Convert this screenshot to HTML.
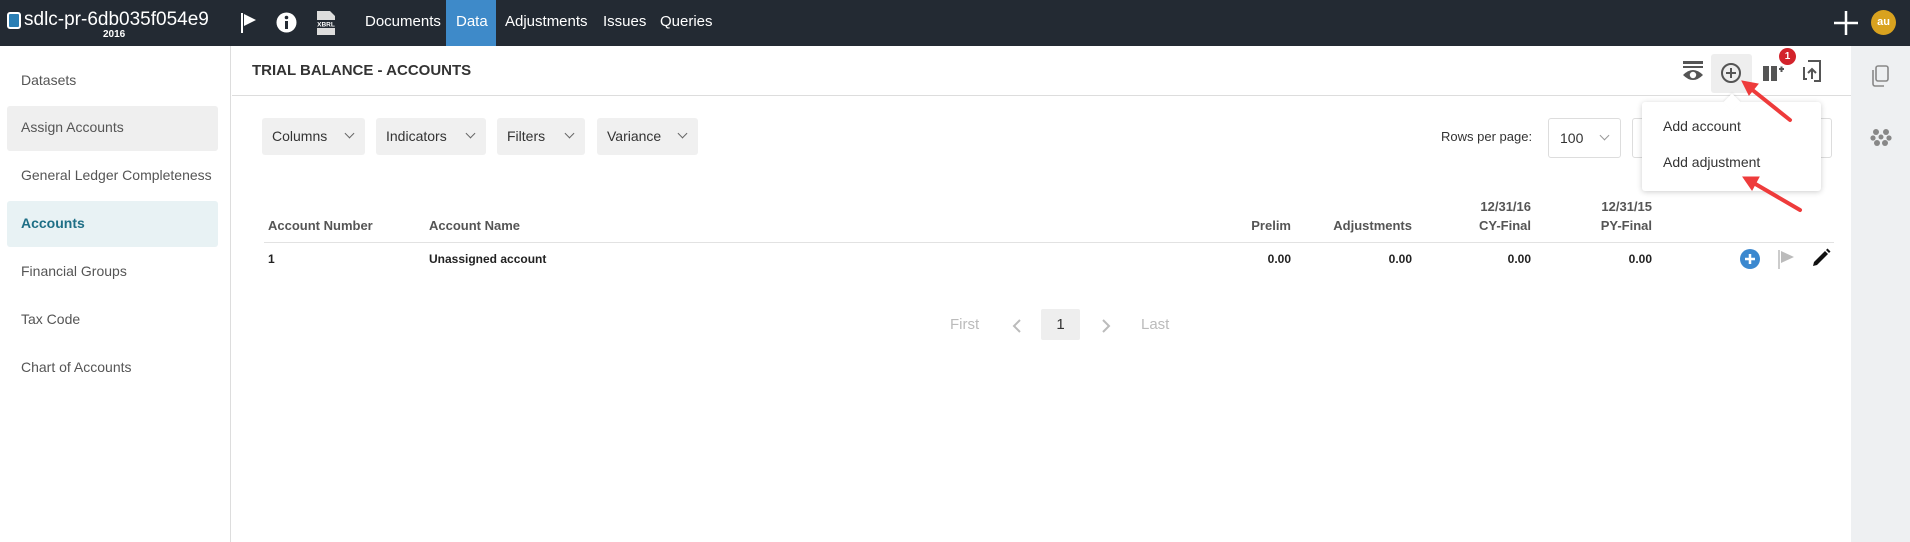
<!DOCTYPE html>
<html><head><meta charset="utf-8"><style>
*{box-sizing:border-box;margin:0;padding:0}
body{width:1910px;height:542px;overflow:hidden;font-family:"Liberation Sans",sans-serif;background:#fff;position:relative;color:#333}
.a{position:absolute;white-space:nowrap}
.top{position:absolute;left:0;top:0;width:1910px;height:46px;background:#232a33}
.nav{color:#fff;font-size:15px;top:13px}
.side{position:absolute;left:0;top:46px;width:231px;height:496px;border-right:1px solid #ddd;background:#fff}
.si{font-size:14px;color:#555;left:21px}
.rail{position:absolute;left:1851px;top:46px;width:59px;height:496px;background:#eef0f2}
.btn{position:absolute;top:118px;height:37px;background:#f0f0f0;border-radius:3px;font-size:14px;color:#333;padding:10px 0 0 10px}
.btn i{position:absolute;right:12px;top:12px;width:7px;height:7px;border-right:1.5px solid #666;border-bottom:1.5px solid #666;transform:rotate(45deg)}
.th{font-size:13px;color:#555;font-weight:bold}
.td{font-size:12px;color:#222;font-weight:bold}
.r{text-align:right}
</style></head><body>
<div class="top"></div>
<div class="a" style="left:7px;top:12px;width:14px;height:17px;border:2px solid #fff;border-radius:3px;background:#2b7fb5"></div>
<div class="a" style="left:24px;top:9px;color:#fff;font-size:19px">sdlc-pr-6db035f054e9</div>
<div class="a" style="left:103px;top:29px;color:#fff;font-size:10px;font-weight:bold">2016</div>
<svg class="a" style="left:240px;top:12px" width="20" height="22"><line x1="2" y1="1" x2="2" y2="21" stroke="#fff" stroke-width="2"/><path d="M4 2 L16 8 L4 14Z" fill="#fff"/></svg>
<svg class="a" style="left:276px;top:12px" width="21" height="21"><circle cx="10.5" cy="10.5" r="10" fill="#fff"/><rect x="9" y="9" width="3" height="8" fill="#232a33"/><circle cx="10.5" cy="5.5" r="1.8" fill="#232a33"/></svg>
<svg class="a" style="left:314px;top:10px" width="24" height="26"><path d="M3 1 H16 L21 6 V25 H3Z" fill="#ddd"/><rect x="2" y="10" width="20" height="8" fill="#232a33"/><text x="12" y="16.5" font-size="6.5" fill="#fff" text-anchor="middle" font-family="Liberation Sans" font-weight="bold">XBRL</text></svg>
<div class="a nav" style="left:365px">Documents</div>
<div class="a" style="left:446px;top:0;width:50px;height:46px;background:#3e8ac9"></div>
<div class="a nav" style="left:456px">Data</div>
<div class="a nav" style="left:505px">Adjustments</div>
<div class="a nav" style="left:603px">Issues</div>
<div class="a nav" style="left:660px">Queries</div>
<svg class="a" style="left:1834px;top:11px" width="24" height="24"><path d="M12 0V24M0 12H24" stroke="#fff" stroke-width="2.5"/></svg>
<div class="a" style="left:1871px;top:10px;width:25px;height:25px;border-radius:50%;background:#d9a21f;color:#fff;font-size:11px;text-align:center;line-height:25px;font-weight:bold">au</div>

<div class="side">
<div class="a si" style="top:26px">Datasets</div>
<div class="a" style="left:7px;top:60px;width:211px;height:45px;background:#efefef;border-radius:3px"></div>
<div class="a si" style="top:73px">Assign Accounts</div>
<div class="a si" style="top:121px">General Ledger Completeness</div>
<div class="a" style="left:7px;top:155px;width:211px;height:46px;background:#e8f2f4;border-radius:3px"></div>
<div class="a si" style="top:169px;color:#1e6f86;font-weight:bold">Accounts</div>
<div class="a si" style="top:217px">Financial Groups</div>
<div class="a si" style="top:265px">Tax Code</div>
<div class="a si" style="top:313px">Chart of Accounts</div>
</div>
<div class="rail"></div>
<svg class="a" style="left:1870px;top:64px" width="20" height="24"><rect x="6" y="2" width="12" height="15" rx="2" fill="none" stroke="#888" stroke-width="1.6"/><path d="M3 6V20a2 2 0 0 0 2 2H14" fill="none" stroke="#888" stroke-width="1.6"/></svg>
<svg class="a" style="left:1870px;top:126px" width="22" height="22" fill="#888"><circle cx="6" cy="6" r="3"/><circle cx="16" cy="6" r="3"/><circle cx="3" cy="12" r="2.6"/><circle cx="19" cy="12" r="2.6"/><circle cx="7" cy="17" r="3"/><circle cx="15" cy="17" r="3"/><circle cx="11" cy="11" r="2.5"/></svg>

<div class="a" style="left:252px;top:62px;font-size:15px;font-weight:bold;color:#333">TRIAL BALANCE - ACCOUNTS</div>
<div class="a" style="left:232px;top:95px;width:1619px;height:1px;background:#ddd"></div>
<svg class="a" style="left:1682px;top:60px" width="22" height="22" fill="#555"><rect x="1" y="1" width="20" height="3"/><rect x="1" y="6" width="20" height="2"/><path d="M1 15 Q11 5 21 15 Q11 25 1 15Z"/><circle cx="11" cy="15" r="3.2" fill="#fff"/></svg>
<div class="a" style="left:1711px;top:54px;width:41px;height:39px;background:#eee;border-radius:3px"></div>
<svg class="a" style="left:1720px;top:62px" width="22" height="22"><circle cx="11" cy="11" r="9" fill="none" stroke="#555" stroke-width="2"/><path d="M11 6V16M6 11H16" stroke="#555" stroke-width="2"/></svg>
<svg class="a" style="left:1762px;top:60px" width="22" height="22" fill="#555"><rect x="1" y="6" width="6" height="15"/><rect x="9" y="6" width="6" height="15"/><path d="M17 9H22M19.5 6.5V12" stroke="#555" stroke-width="2"/></svg>
<div class="a" style="left:1779px;top:48px;width:17px;height:17px;border-radius:50%;background:#d3232b;color:#fff;font-size:10px;font-weight:bold;text-align:center;line-height:17px">1</div>
<svg class="a" style="left:1802px;top:59px" width="20" height="24"><path d="M6 2H18V22H12M2 8V20H5" fill="none" stroke="#555" stroke-width="2"/><path d="M10 20V10M6 14L10 10L14 14" fill="none" stroke="#555" stroke-width="2"/></svg>

<div class="btn" style="left:262px;width:103px">Columns<i></i></div>
<div class="btn" style="left:376px;width:110px">Indicators<i></i></div>
<div class="btn" style="left:497px;width:88px">Filters<i></i></div>
<div class="btn" style="left:597px;width:101px">Variance<i></i></div>

<div class="a" style="left:1441px;top:129px;font-size:13px;color:#333">Rows per page:</div>
<div class="a" style="left:1548px;top:118px;width:73px;height:40px;border:1px solid #ddd;border-radius:3px;font-size:14px;padding:11px 0 0 11px">100<span style="position:absolute;right:12px;top:13px;width:7px;height:7px;border-right:1.5px solid #999;border-bottom:1.5px solid #999;transform:rotate(45deg)"></span></div>
<div class="a" style="left:1632px;top:118px;width:200px;height:40px;border:1px solid #ddd;border-radius:3px"></div>

<div class="a" style="left:1642px;top:102px;width:179px;height:89px;background:#fff;border-radius:3px;box-shadow:0 1px 6px rgba(0,0,0,.2)"></div>
<div class="a" style="left:1726px;top:96px;width:12px;height:12px;background:#fff;transform:rotate(45deg);box-shadow:-1px -1px 2px rgba(0,0,0,.08)"></div>
<div class="a" style="left:1663px;top:118px;font-size:14px;color:#333">Add account</div>
<div class="a" style="left:1663px;top:154px;font-size:14px;color:#333">Add adjustment</div>

<div class="a th r" style="left:1420px;top:199px;width:111px">12/31/16</div>
<div class="a th r" style="left:1540px;top:199px;width:112px">12/31/15</div>
<div class="a th" style="left:268px;top:218px">Account Number</div>
<div class="a th" style="left:429px;top:218px">Account Name</div>
<div class="a th r" style="left:1200px;top:218px;width:91px">Prelim</div>
<div class="a th r" style="left:1300px;top:218px;width:112px">Adjustments</div>
<div class="a th r" style="left:1420px;top:218px;width:111px">CY-Final</div>
<div class="a th r" style="left:1540px;top:218px;width:112px">PY-Final</div>
<div class="a" style="left:264px;top:242px;width:1570px;height:1px;background:#e2e2e2"></div>
<div class="a td" style="left:268px;top:252px">1</div>
<div class="a td" style="left:429px;top:252px">Unassigned account</div>
<div class="a td r" style="left:1200px;top:252px;width:91px">0.00</div>
<div class="a td r" style="left:1300px;top:252px;width:112px">0.00</div>
<div class="a td r" style="left:1420px;top:252px;width:111px">0.00</div>
<div class="a td r" style="left:1540px;top:252px;width:112px">0.00</div>
<svg class="a" style="left:1740px;top:249px" width="20" height="20"><circle cx="10" cy="10" r="10" fill="#3b88cf"/><path d="M10 5V15M5 10H15" stroke="#fff" stroke-width="2.5"/></svg>
<svg class="a" style="left:1778px;top:249px" width="18" height="20"><line x1="1" y1="1" x2="1" y2="20" stroke="#bbb" stroke-width="1.5"/><path d="M3 2 L16 8 L3 14Z" fill="#bbb"/></svg>
<svg class="a" style="left:1811px;top:248px" width="20" height="20"><path d="M2 18 L3 14 L14 3 L17 6 L6 17Z" fill="#111"/><path d="M15 2 L16.5 0.5 L19.5 3.5 L18 5Z" fill="#111"/></svg>

<div class="a" style="left:950px;top:316px;font-size:15px;color:#bbb">First</div>
<svg class="a" style="left:1011px;top:318px" width="12" height="16"><path d="M9 2L3 8L9 14" fill="none" stroke="#bbb" stroke-width="2"/></svg>
<div class="a" style="left:1041px;top:309px;width:39px;height:31px;background:#eee;border-radius:2px;font-size:15px;text-align:center;line-height:31px;color:#333">1</div>
<svg class="a" style="left:1100px;top:318px" width="12" height="16"><path d="M3 2L9 8L3 14" fill="none" stroke="#bbb" stroke-width="2"/></svg>
<div class="a" style="left:1141px;top:316px;font-size:15px;color:#bbb">Last</div>

<svg class="a" style="left:0;top:0" width="1910" height="542">
<g stroke="#ee3b3b" stroke-width="4" stroke-linecap="round" fill="#ee3b3b">
<line x1="1790" y1="120" x2="1750" y2="88"/><path d="M1742 81 L1758 84 L1749 95Z" stroke-width="1"/>
<line x1="1800" y1="210" x2="1752" y2="182"/><path d="M1743 177 L1759 177 L1752 190Z" stroke-width="1"/>
</g></svg>
</body></html>
